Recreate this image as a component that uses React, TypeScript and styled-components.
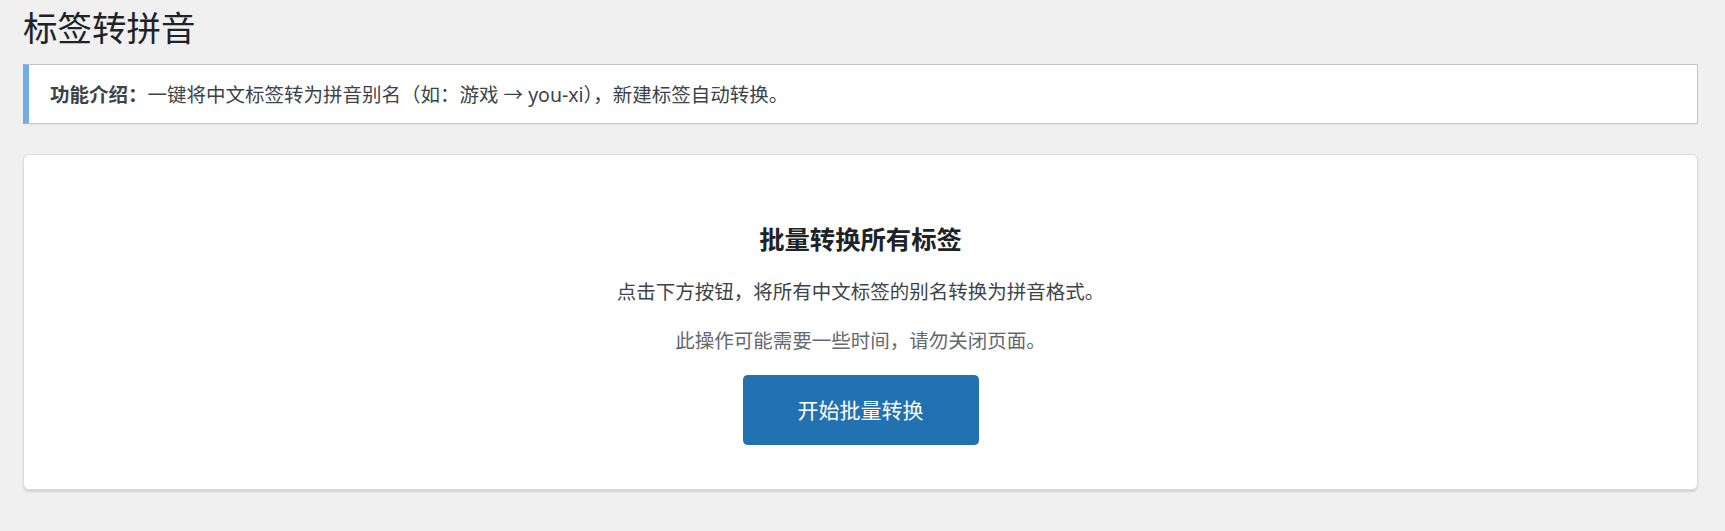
import styled, { createGlobalStyle } from 'styled-components'

const GlobalStyle = createGlobalStyle`
  html, body {
    margin: 0;
    padding: 0;
    background: #f0f0f1;
  }
  body {
    font-family: "Noto Sans", "Noto Sans CJK SC", sans-serif;
    color: #3c434a;
    font-size: 19.5px;
    line-height: 1.5;
  }
`

const Wrap = styled.div`
  padding: 4.5px 27px 40px 23px;
`

const PageTitle = styled.h1`
  margin: 0;
  font-size: 34.5px;
  font-weight: 400;
  line-height: 45px;
  color: #1d2327;
`

const Notice = styled.div`
  margin: 14.5px 0 30px;
  background: #fff;
  border: 1.5px solid #c3c4c7;
  border-left: 6px solid #72aee6;
  box-shadow: 0 1.5px 1.5px rgba(0, 0, 0, 0.04);
  padding: 14.5px 21px;
  p {
    margin: 0;
    line-height: 29.25px;
  }
  strong {
    font-weight: 600;
  }
`

const Card = styled.div`
  background: #fff;
  border: 1.5px solid #dcdcde;
  border-radius: 6px;
  box-shadow: 0 1.5px 2px rgba(0, 0, 0, 0.12);
  padding: 65.5px 45px 24px;
  text-align: center;
`

const CardTitle = styled.h2`
  margin: 0 0 20px;
  font-size: 25.35px;
  font-weight: 600;
  line-height: 36px;
  color: #1d2327;
`

const Text = styled.p<{ $muted?: boolean }>`
  margin: 19.5px 0;
  line-height: 29.25px;
  color: ${(p) => (p.$muted ? '#646970' : '#3c434a')};
`

const ButtonRow = styled.p`
  margin: 20px 0;
`

const HeroButton = styled.button`
  display: inline-block;
  box-sizing: border-box;
  height: 70px;
  padding: 0 54px;
  font-family: inherit;
  font-size: 21px;
  line-height: 66px;
  color: #fff;
  background: #2271b1;
  border: 1.5px solid #2271b1;
  border-radius: 4.5px;
  cursor: pointer;
  vertical-align: top;
`

export default function App() {
  return (
    <>
      <GlobalStyle />
      <Wrap>
        <PageTitle>标签转拼音</PageTitle>
        <Notice>
          <p>
            <strong>功能介绍：</strong>一键将中文标签转为拼音别名（如：游戏 → you-xi），新建标签自动转换。
          </p>
        </Notice>
        <Card>
          <CardTitle>批量转换所有标签</CardTitle>
          <Text>点击下方按钮，将所有中文标签的别名转换为拼音格式。</Text>
          <Text $muted>此操作可能需要一些时间，请勿关闭页面。</Text>
          <ButtonRow>
            <HeroButton type="button">开始批量转换</HeroButton>
          </ButtonRow>
        </Card>
      </Wrap>
    </>
  )
}
